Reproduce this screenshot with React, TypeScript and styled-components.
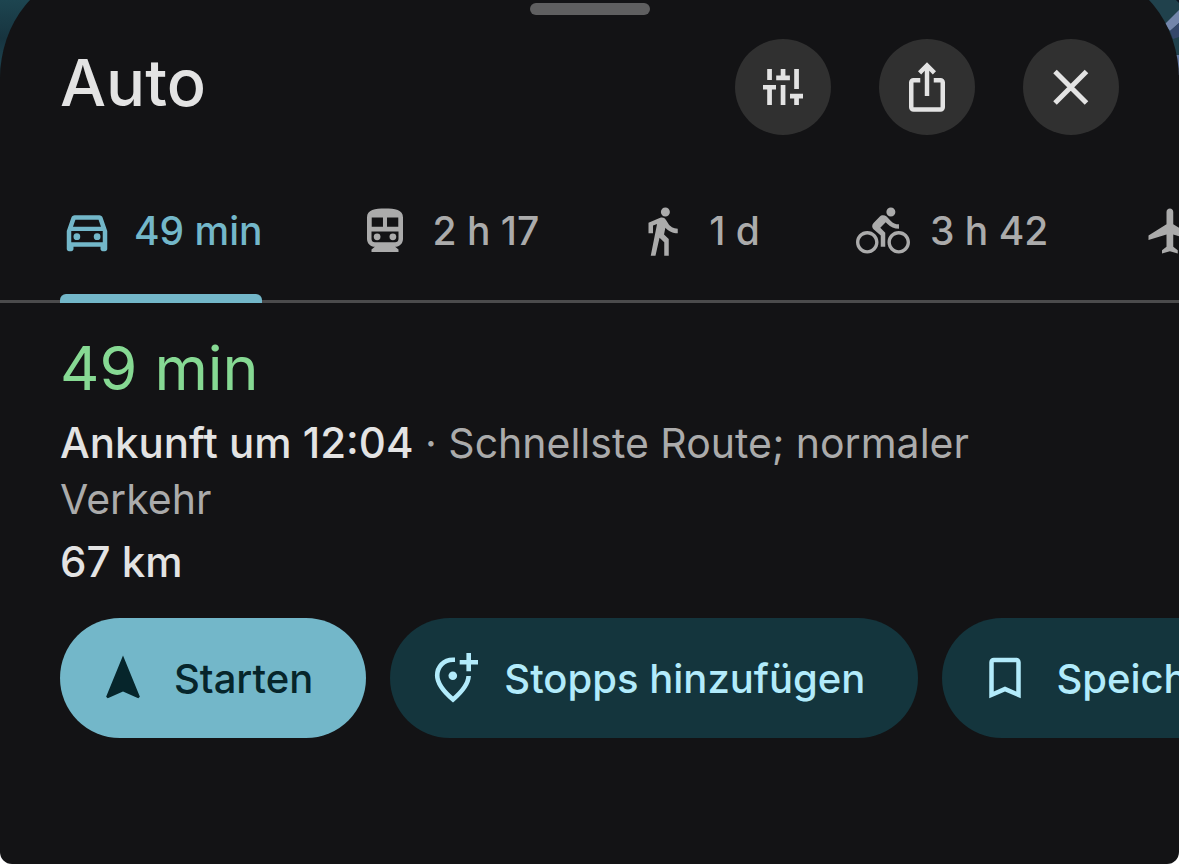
import React from 'react';
import styled, { createGlobalStyle } from 'styled-components';
import {
  MdBookmarkBorder,
  MdDirectionsBike,
  MdDirectionsWalk,
  MdFlight,
  MdIosShare,
  MdNavigation,
  MdOutlineDirectionsCar,
} from 'react-icons/md';

const color = {
  sheet: '#131315',
  text: '#e3e3e3',
  muted: '#ababab',
  accent: '#73b7c9',
  onAccent: '#06252b',
  tonal: '#14353d',
  onTonal: '#b2ebfb',
  green: '#86d993',
  chip: '#303030',
  line: '#4b4b4c',
};

const GlobalStyle = createGlobalStyle`
  *, *::before, *::after { box-sizing: border-box; }
  body {
    margin: 0;
    background: #ffffff;
    font-family: Inter, 'Liberation Sans', sans-serif;
    color: ${color.text};
  }
  h1, h2, p { margin: 0; }
  button { font: inherit; border: 0; cursor: pointer; }
`;

const Page = styled.div`
  position: relative;
  display: flex;
  min-height: 100vh;
  overflow: hidden;
`;

const MapStrip = styled.div`
  position: absolute;
  inset: 0 0 auto 0;
  display: flex;
  justify-content: space-between;
  height: 110px;
`;

const Sheet = styled.main`
  position: relative;
  flex: 1;
  min-width: 0;
  margin-top: -25px;
  padding-top: 28px;
  border-radius: 86px 86px 12px 12px / 104px 104px 12px 12px;
  background: ${color.sheet};
  overflow: hidden;
`;

const Handle = styled.div`
  width: 120px;
  height: 12px;
  margin: 0 auto;
  border-radius: 6px;
  background: #5f5f60;
`;

const Header = styled.header`
  display: flex;
  align-items: flex-start;
  justify-content: space-between;
  padding: 24px 60px 0;
`;

const Title = styled.h1`
  font-size: 65px;
  font-weight: 500;
  line-height: 88px;
`;

const HeaderActions = styled.div`
  display: flex;
  gap: 48px;
`;

const RoundButton = styled.button`
  display: grid;
  place-items: center;
  width: 96px;
  height: 96px;
  padding: 0;
  border-radius: 50%;
  background: ${color.chip};
  color: ${color.text};
`;

const Tabs = styled.nav`
  display: flex;
  gap: 96px;
  padding-left: 60px;
  overflow: hidden;
  box-shadow: inset 0 -3px ${color.line};
`;

const Tab = styled.button<{ $active?: boolean }>`
  position: relative;
  display: flex;
  flex: none;
  align-items: center;
  gap: 20px;
  padding: 69px 0 45px;
  background: none;
  color: ${(p) => (p.$active ? color.accent : color.muted)};
  font-size: 39px;
  font-weight: 500;
  line-height: 54px;
  white-space: nowrap;

  &::after {
    content: '';
    display: ${(p) => (p.$active ? 'block' : 'none')};
    position: absolute;
    inset: auto 0 0 0;
    height: 9px;
    border-radius: 6px 6px 0 0;
    background: ${color.accent};
  }
`;

const Route = styled.section`
  padding: 29px 120px 0 60px;
`;

const Duration = styled.h2`
  color: ${color.green};
  font-size: 61px;
  font-weight: 400;
  line-height: 72px;
`;

const Summary = styled.p`
  margin-top: 11px;
  color: ${color.muted};
  font-size: 41px;
  line-height: 56px;
`;

const Arrival = styled.strong`
  color: ${color.text};
  font-size: 42px;
  font-weight: 500;
`;

const Distance = styled.p`
  margin-top: 7px;
  font-size: 42px;
  font-weight: 500;
  line-height: 56px;
`;

const Actions = styled.div`
  display: flex;
  gap: 24px;
  padding: 28px 0 0 60px;
  overflow: hidden;
`;

const Pill = styled.button<{ $primary?: boolean }>`
  display: flex;
  flex: none;
  align-items: center;
  gap: 24px;
  height: 120px;
  padding: 0 53px 0 36px;
  border-radius: 60px;
  background: ${(p) => (p.$primary ? color.accent : color.tonal)};
  color: ${(p) => (p.$primary ? color.onAccent : color.onTonal)};
  font-size: 40px;
  font-weight: 500;
  white-space: nowrap;
`;

const TuneIcon = () => (
  <svg width="48" height="48" viewBox="0 0 48 48" fill="currentColor" aria-hidden="true">
    <path d="M8.200 6h4.700v11H8.200zM4 22h13v4.400h-4.100V42H8.200V26.400H4zM21.700 6h4.700v6.600h4.500v4.700H17.200v-4.700h4.500zM21.700 22h4.700v20h-4.700zM35.200 6h4.700v20h-4.700zM31 30.800h13v4.600h-4.100V42h-4.700v-6.600H31z" />
  </svg>
);

const CloseIcon = () => (
  <svg width="48" height="48" viewBox="0 0 48 48" stroke="currentColor" strokeWidth="5" aria-hidden="true">
    <path d="M8 8.500L39.500 40M39.500 8.500L8 40" />
  </svg>
);

const TrainIcon = () => (
  <svg width="54" height="54" viewBox="0 0 24 24" fill="currentColor" aria-hidden="true">
    <path
      fillRule="evenodd"
      d="M12 2c-4.420 0-8 .5-8 4v9.500C4 17.430 5.570 19 7.500 19L6 20.200v1.100h12v-1.100L16.500 19c1.930 0 3.500-1.570 3.500-3.500V6c0-3.500-3.580-4-8-4zM6.100 6h5v4.100h-5zM12.900 6h5v4.100h-5zM6 12.200h12v3.300c0 .83-.67 1.500-1.500 1.500h-9C6.670 17 6 16.330 6 15.500z"
    />
    <circle cx="8.500" cy="14.600" r="1.500" />
    <circle cx="15.500" cy="14.600" r="1.500" />
  </svg>
);

const AddStopIcon = () => (
  <svg width="54" height="54" viewBox="0 0 54 54" fill="none" stroke="currentColor" strokeWidth="4.600" aria-hidden="true">
    <path d="M29 8.700h-2C17.500 8.700 11.200 15.800 11.200 24.500c0 7.500 5.600 15.300 15.800 24C36.800 40 42.400 32.500 42.600 25" />
    <path d="M33.700 11.300H52M42.700 2v18.300" />
    <circle cx="26.800" cy="24.700" r="4.300" fill="currentColor" stroke="none" />
  </svg>
);

export default function App() {
  return (
    <>
      <GlobalStyle />
      <Page>
        <MapStrip aria-hidden="true">
          <svg width="50" height="110" viewBox="0 0 50 110">
            <defs>
              <linearGradient id="water" x1="0" y1="0" x2="0" y2="1">
                <stop offset="0" stopColor="#1d4550" />
                <stop offset="0.35" stopColor="#17343f" />
                <stop offset="0.55" stopColor="#1c3f4b" />
                <stop offset="0.9" stopColor="#131315" />
              </linearGradient>
            </defs>
            <rect width="50" height="110" fill="url(#water)" />
          </svg>
          <svg width="50" height="110" viewBox="0 0 50 110">
            <rect width="50" height="110" fill="#20414c" />
            <path d="M47 0h3v3z" fill="#0c1420" />
            <path d="M36 24L50 10v13l-9 8z" fill="#7486ab" />
            <path d="M41 31l9-8v14l-6 2z" fill="#35476a" />
            <path d="M47 55h3v20h-3z" fill="#6478a0" />
            <path d="M47 75h3v35h-3z" fill="#151d2a" />
          </svg>
        </MapStrip>
        <Sheet>
          <Handle />
          <Header>
            <Title>Auto</Title>
            <HeaderActions>
              <RoundButton type="button" aria-label="Optionen"><TuneIcon /></RoundButton>
              <RoundButton type="button" aria-label="Teilen"><MdIosShare size={54} /></RoundButton>
              <RoundButton type="button" aria-label="Schließen"><CloseIcon /></RoundButton>
            </HeaderActions>
          </Header>
          <Tabs>
            <Tab type="button" $active aria-current="true"><MdOutlineDirectionsCar size={54} />49 min</Tab>
            <Tab type="button"><TrainIcon />2 h 17</Tab>
            <Tab type="button"><MdDirectionsWalk size={54} />1 d</Tab>
            <Tab type="button"><MdDirectionsBike size={54} />3 h 42</Tab>
            <Tab type="button" aria-label="Flug"><MdFlight size={54} /></Tab>
          </Tabs>
          <Route>
            <Duration>49 min</Duration>
            <Summary>
              <Arrival>Ankunft um 12:04</Arrival> · Schnellste Route; normaler Verkehr
            </Summary>
            <Distance>67 km</Distance>
          </Route>
          <Actions>
            <Pill type="button" $primary><MdNavigation size={54} />Starten</Pill>
            <Pill type="button"><AddStopIcon />Stopps hinzufügen</Pill>
            <Pill type="button"><MdBookmarkBorder size={54} />Speichern</Pill>
          </Actions>
        </Sheet>
      </Page>
    </>
  );
}
